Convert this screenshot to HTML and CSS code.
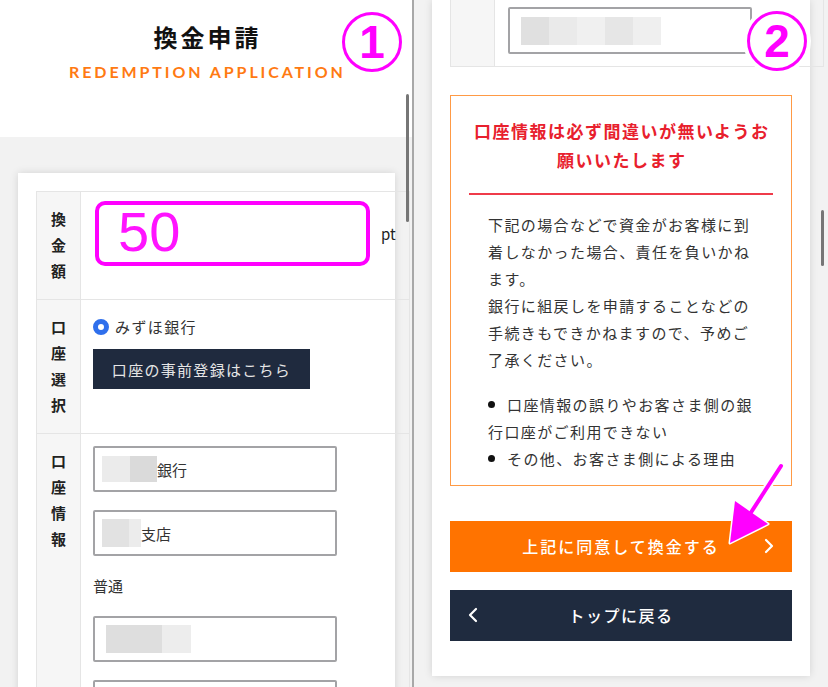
FILE: index.html
```html
<!DOCTYPE html>
<html lang="ja">
<head>
<meta charset="utf-8">
<title>換金申請</title>
<link rel="stylesheet" href="styles.css">
</head>
<body>
<div class="screen">
  <section class="panel panel-left">
    <header class="page-head">
      <h1 class="title">換金申請</h1>
      <p class="subtitle">REDEMPTION APPLICATION</p>
    </header>
    <div class="panel-body">
      <div class="card">
        <div class="form-table">
          <div class="row">
            <div class="label">換金額</div>
            <div class="cell cell-amount">
              <div class="amount-box">50</div>
              <span class="unit">pt</span>
            </div>
          </div>
          <div class="row">
            <div class="label">口座選択</div>
            <div class="cell cell-select">
              <label class="radio"><span class="radio-dot"></span>みずほ銀行</label>
              <button class="btn-register">口座の事前登録はこちら</button>
            </div>
          </div>
          <div class="row">
            <div class="label">口座情報</div>
            <div class="cell cell-info">
              <div class="field"><span class="blur blur-a"></span>銀行</div>
              <div class="field"><span class="blur blur-b"></span>支店</div>
              <p class="field-text">普通</p>
              <div class="field"><span class="blur blur-c"></span></div>
              <div class="field"></div>
            </div>
          </div>
        </div>
      </div>
    </div>
    <span class="scrollbar scrollbar-left"></span>
  </section>
  <div class="divider"></div>
  <section class="panel panel-right">
    <div class="card card-right">
      <div class="form-table form-table-cont">
        <div class="row">
          <div class="label"></div>
          <div class="cell cell-cont">
            <div class="field field-tall"><span class="blur blur-d"></span></div>
          </div>
        </div>
      </div>
      <div class="notice">
        <p class="notice-title">口座情報は必ず間違いが無いようお<br>願いいたします</p>
        <div class="notice-rule"></div>
        <div class="notice-body">
          <p>下記の場合などで資金がお客様に到<br>着しなかった場合、責任を負いかね<br>ます。<br>銀行に組戻しを申請することなどの<br>手続きもできかねますので、予めご<br>了承ください。</p>
          <ul class="notice-list">
            <li>口座情報の誤りやお客さま側の銀<br>行口座がご利用できない</li>
            <li>その他、お客さま側による理由</li>
          </ul>
        </div>
      </div>
      <button class="btn btn-agree">
        <span></span>
        <span class="btn-text">上記に同意して換金する</span>
        <svg class="chev" width="10" height="16" viewBox="0 0 10 16"><polyline points="2,2 8,8 2,14" fill="none" stroke="#fff" stroke-width="2.2" stroke-linecap="round" stroke-linejoin="round"/></svg>
      </button>
      <button class="btn btn-back">
        <svg class="chev" width="10" height="16" viewBox="0 0 10 16"><polyline points="8,2 2,8 8,14" fill="none" stroke="#fff" stroke-width="2.2" stroke-linecap="round" stroke-linejoin="round"/></svg>
        <span class="btn-text">トップに戻る</span>
        <span></span>
      </button>
    </div>
    <span class="scrollbar scrollbar-right"></span>
  </section>

  <span class="badge badge-1">1</span>
  <span class="badge badge-2">2</span>
  <svg class="arrow" width="828" height="687" viewBox="0 0 828 687">
    <g stroke="#fff" stroke-width="3" stroke-linejoin="round">
      <line x1="781" y1="466" x2="750" y2="514" stroke-width="8" stroke-linecap="round"/>
      <polygon points="730,543 735,501 768,524"/>
    </g>
    <line x1="781" y1="466" x2="750" y2="514" stroke="#ff00ff" stroke-width="4" stroke-linecap="round"/>
    <polygon points="730,543 735,501 768,524" fill="#ff00ff"/>
  </svg>
</div>
</body>
</html>
```
FILE: styles.css
```css
* { box-sizing: border-box; margin: 0; padding: 0; }
body {
  margin: 0;
  width: 828px;
  height: 687px;
  overflow: hidden;
  background: #f2f2f2;
  font-family: "Noto Sans CJK JP", "Noto Sans", sans-serif;
  color: #333;
}
.screen { position: relative; display: flex; height: 687px; }
.panel { position: relative; overflow: hidden; background: #f2f2f2; flex: none; }
.panel-left { width: 412px; }
.divider { width: 2px; flex: none; background: #a8a8a8; }
.panel-right { width: 414px; }

/* header */
.page-head { height: 137px; background: #fff; text-align: center; padding-top: 20px; }
.title {
  font-size: 24px; font-weight: 700; line-height: 34px;
  letter-spacing: 3px; padding-left: 3px; color: #111;
}
.subtitle {
  margin-top: 8px; font-family: "Lato", "Noto Sans", sans-serif;
  font-size: 16px; font-weight: 700; line-height: 20px;
  letter-spacing: 2.9px; padding-left: 2.9px; color: #ff7a12;
}

.panel-body { padding: 36px 17px 0 18px; }
.card {
  background: #fff;
  padding: 18px;
  box-shadow: 0 0 8px rgba(0, 0, 0, 0.13);
}

/* form table */
.form-table { width: 374px; border: 1px solid #e5e5e5; }
.row { display: flex; border-top: 1px solid #e5e5e5; }
.row:first-child { border-top: none; }
.label {
  flex: none; width: 44px;
  background: #f6f6f6; border-right: 1px solid #e5e5e5;
  padding: 14px 12px 15px;
  font-size: 15px; font-weight: 700; line-height: 26px;
  text-align: center; color: #222;
}
.cell { flex: 1; padding-left: 12px; }
.cell-amount { display: flex; align-items: center; padding: 8px 0 32px 14px; }
.amount-box {
  width: 275px; height: 65px;
  border: 4px solid #ff00ff; border-radius: 10px;
  padding-left: 19px;
  font-family: "Liberation Sans", sans-serif;
  font-size: 56px; line-height: 54px; color: #ff14ff;
}
.unit { margin-left: 11px; font-size: 15px; color: #222; }

.cell-select { padding-top: 16px; }
.radio { display: flex; align-items: center; font-size: 15px; line-height: 22px; letter-spacing: 1.4px; color: #333; }
.radio-dot {
  width: 16px; height: 16px; margin-right: 6px; border-radius: 50%;
  background: #fff; border: 5px solid #2f6fec;
}
.btn-register {
  display: block; margin-top: 11px;
  width: 217px; height: 40px;
  background: #1f2a3e; color: #e6e6e6; border: none;
  font-family: inherit; font-size: 15px; letter-spacing: 1.3px;
}

.cell-info { padding-top: 12px; }
.field {
  display: flex; align-items: center;
  width: 244px; height: 46px; margin-bottom: 18px;
  border: 2px solid #a3a3a6; border-radius: 2px;
  padding-left: 7px; font-size: 15px; color: #333;
}
.field-text { margin-top: 2px; margin-bottom: 18px; font-size: 15px; line-height: 24px; color: #333; }
.blur { display: block; height: 26px; }
.blur-a { width: 55px; background: linear-gradient(90deg, #ebebeb 0 50%, #dadada 50% 100%); }
.blur-b { width: 39px; height: 28px; background: linear-gradient(90deg, #e2e2e2 0 70%, #ececec 70% 100%); }
.blur-c { width: 85px; height: 28px; margin-left: 4px; background: linear-gradient(90deg, #dedede 0 66%, #ededed 66% 100%); }
.blur-d { width: 140px; height: 28px; margin-left: 4px; background: linear-gradient(90deg, #e0e0e0 0 20%, #eaeaea 20% 40%, #f0f0f0 40% 60%, #e6e6e6 60% 80%, #efefef 80% 100%); }

/* right panel */
.card-right { margin: 0 18px; padding: 0 18px 35px; }
.form-table-cont { border-top: none; }
.cell-cont { padding: 7px 0 12px 13px; }
.field-tall { height: 47px; margin-bottom: 0; }

.notice {
  margin-top: 28px; border: 1.5px solid #ff9a45;
  padding: 20px 18px 13px;
}
.notice-title {
  text-align: center; font-size: 17px; font-weight: 700; line-height: 29px;
  letter-spacing: 1.5px; padding-left: 1.5px; color: #e8202d;
}
.notice-rule { margin-top: 19px; height: 1.5px; background: #ef3b4a; }
.notice-body { padding: 16px 19px 0; font-size: 15px; line-height: 27px; letter-spacing: 1.4px; color: #333; }
.notice-list { margin-top: 18px; list-style: none; }
.notice-list li::before {
  content: ""; display: inline-block; width: 7px; height: 7px; border-radius: 50%;
  background: #111; margin-right: 12px; vertical-align: middle; position: relative; top: -2px;
}

.btn {
  display: grid; grid-template-columns: 46px 1fr 46px; align-items: center; justify-items: center;
  width: 100%; height: 51px; border: none;
  font-family: inherit; color: #fff; font-size: 16px; font-weight: 500;
}
.btn-agree { margin-top: 35px; background: #ff7300; letter-spacing: 2px; }
.btn-back { margin-top: 18px; background: #1f2b3f; letter-spacing: 1.5px; }

/* overlays */
.scrollbar { position: absolute; width: 3px; border-radius: 2px; background: #767676; }
.scrollbar-left { left: 406px; top: 94px; height: 128px; }
.scrollbar-right { left: 407px; top: 210px; height: 56px; }

.badge {
  position: absolute; width: 60px; height: 60px; border-radius: 50%;
  border: 3.5px solid #ff00ff; background: #fff;
  display: flex; align-items: center; justify-content: center;
  font-family: "Liberation Sans", sans-serif; font-size: 46px; font-weight: 700; color: #ff00ff;
}
.badge-1 { left: 342px; top: 12px; }
.badge-2 { left: 747px; top: 11px; box-shadow: 0 0 0 4px #fff; }
.arrow { position: absolute; left: 0; top: 0; pointer-events: none; }
```
